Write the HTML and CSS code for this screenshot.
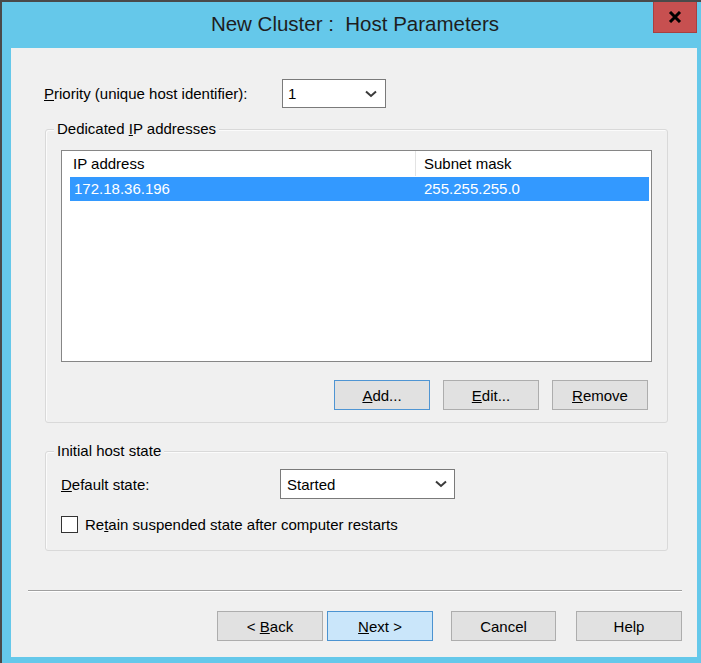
FILE: index.html
```html
<!DOCTYPE html>
<html>
<head>
<meta charset="utf-8">
<link rel="stylesheet" href="styles.css">
</head>
<body>
<div class="window">
  <div class="titlebar">
    <div class="title">New Cluster :&nbsp; Host Parameters</div>
    <div class="close">
      <svg width="14" height="12" viewBox="0 0 14 12"><path d="M2 1 L12 11 M12 1 L2 11" stroke="#000" stroke-width="3" fill="none"/></svg>
    </div>
  </div>
  <div class="content">
    <div class="priority-row">
      <span class="priority-label"><u>P</u>riority (unique host identifier):</span>
      <div class="combo combo-priority">
        <span class="combo-value">1</span>
        <svg class="chev" width="12" height="8" viewBox="0 0 12 8"><path d="M1 1.5 L6 6 L11 1.5" stroke="#3a3a3a" stroke-width="2" fill="none"/></svg>
      </div>
    </div>

    <div class="group group-ip">
      <span class="group-title">Dedicated <u>I</u>P addresses</span>
      <div class="list">
        <div class="list-header">
          <div class="hcell hcell-ip">IP address</div>
          <div class="hcell hcell-mask">Subnet mask</div>
        </div>
        <div class="list-row selected">
          <div class="cell cell-ip">172.18.36.196</div>
          <div class="cell cell-mask">255.255.255.0</div>
        </div>
      </div>
      <div class="btn-row">
        <button class="btn btn-default"><u>A</u>dd...</button>
        <button class="btn"><u>E</u>dit...</button>
        <button class="btn"><u>R</u>emove</button>
      </div>
    </div>

    <div class="group group-state">
      <span class="group-title">Initial host state</span>
      <div class="state-row">
        <span class="state-label"><u>D</u>efault state:</span>
        <div class="combo combo-state">
          <span class="combo-value">Started</span>
          <svg class="chev" width="12" height="8" viewBox="0 0 12 8"><path d="M1 1.5 L6 6 L11 1.5" stroke="#3a3a3a" stroke-width="2" fill="none"/></svg>
        </div>
      </div>
      <div class="check-row">
        <span class="checkbox"></span>
        <span class="check-label">Re<u>t</u>ain suspended state after computer restarts</span>
      </div>
    </div>

    <div class="separator"></div>

    <div class="footer">
      <button class="btn btn-wide">&lt; <u>B</u>ack</button>
      <button class="btn btn-wide btn-next"><u>N</u>ext &gt;</button>
      <button class="btn btn-cancel">Cancel</button>
      <button class="btn btn-wide btn-help">Help</button>
    </div>
  </div>
</div>
</body>
</html>
```

FILE: styles.css
```css
html, body {
  margin: 0;
  padding: 0;
  background: #65c8ea;
}
body {
  font-family: "Liberation Sans", Arial, sans-serif;
  font-size: 15px;
  color: #000;
}
.window {
  width: 701px;
  height: 663px;
  box-sizing: border-box;
  background: #65c8ea;
  border-top: 2px solid #4a4a4a;
  border-left: 2px solid #4a4a4a;
  display: flex;
  flex-direction: column;
}
.titlebar {
  height: 46px;
  display: flex;
  flex-shrink: 0;
}
.title {
  flex: 1;
  text-align: center;
  padding-left: 55px;
  font-size: 20.5px;
  line-height: 44px;
  color: #1e1e1e;
}
.close {
  width: 44px;
  height: 31px;
  margin-right: 4px;
  background: #c75050;
  box-sizing: border-box;
  border: 1px solid #a84040;
  border-top: 0;
  display: flex;
  align-items: center;
  justify-content: center;
}
.content {
  flex: 1;
  margin: 0 4px 6px 9px;
  background: #f0f0f0;
  padding-top: 31px;
  box-sizing: border-box;
}
.priority-row {
  display: flex;
  align-items: center;
  padding-left: 33px;
}
.priority-label {
  width: 238px;
}
.combo {
  box-sizing: border-box;
  background: #fff;
  border: 1px solid #7a7a7a;
  display: flex;
  align-items: center;
  justify-content: space-between;
}
.combo-priority {
  width: 104px;
  height: 29px;
  padding: 0 8px 0 5px;
}
.combo-state {
  width: 175px;
  height: 30px;
  padding: 0 7px 0 6px;
}
.group {
  position: relative;
  margin-left: 34px;
  width: 623px;
  box-sizing: border-box;
  border: 1px solid #d9d9d9;
  border-radius: 3px;
  box-shadow: inset 1px 1px 0 #fbfbfb;
}
.group-title {
  position: absolute;
  top: -10px;
  left: 8px;
  line-height: 18px;
  padding: 0 3px;
  background: #f0f0f0;
}
.group-ip {
  margin-top: 21px;
  padding: 20px 15px 12px 15px;
}
.list {
  height: 212px;
  box-sizing: border-box;
  border: 1px solid #868686;
  background: #fff;
}
.list-header {
  display: flex;
  height: 25px;
  align-items: stretch;
}
.hcell {
  line-height: 25px;
}
.hcell-ip {
  width: 342px;
  padding-left: 11px;
  border-right: 1px solid #e3e3e3;
}
.hcell-mask {
  flex: 1;
  padding-left: 8px;
}
.list-row {
  display: flex;
  height: 24px;
  margin: 1px 2px 0 8px;
  line-height: 24px;
}
.list-row.selected {
  background: #3399ff;
  color: #fff;
}
.cell-ip {
  width: 346px;
  padding-left: 4px;
}
.cell-mask {
  padding-left: 4px;
}
.btn-row {
  display: flex;
  justify-content: flex-end;
  gap: 13px;
  margin-top: 18px;
  padding-right: 4px;
}
.btn {
  font-family: "Liberation Sans", Arial, sans-serif;
  font-size: 15px;
  color: #000;
  width: 96px;
  height: 30px;
  box-sizing: border-box;
  background: #e1e1e1;
  border: 1px solid #adadad;
  padding: 0;
  margin: 0;
}
.btn-default {
  border-color: #4f95d3;
}
.group-state {
  margin-top: 28px;
  padding: 17px 15px 17px 15px;
}
.state-row {
  display: flex;
  align-items: center;
}
.state-label {
  width: 219px;
}
.check-row {
  display: flex;
  align-items: center;
  margin-top: 17px;
}
.checkbox {
  width: 17px;
  height: 17px;
  box-sizing: border-box;
  border: 1px solid #333;
  background: #fff;
  margin-right: 7px;
}
.separator {
  margin: 39px 15px 0 17px;
  border-top: 1px solid #a0a0a0;
  border-bottom: 1px solid #fff;
}
.footer {
  display: flex;
  justify-content: flex-end;
  margin-top: 19px;
  padding-right: 15px;
}
.btn-wide {
  width: 106px;
}
.btn-next {
  margin-left: 4px;
  background: #cae6fa;
  border-color: #4b93d1;
}
.btn-cancel {
  width: 105px;
  margin-left: 18px;
}
.btn-help {
  margin-left: 20px;
}
```
